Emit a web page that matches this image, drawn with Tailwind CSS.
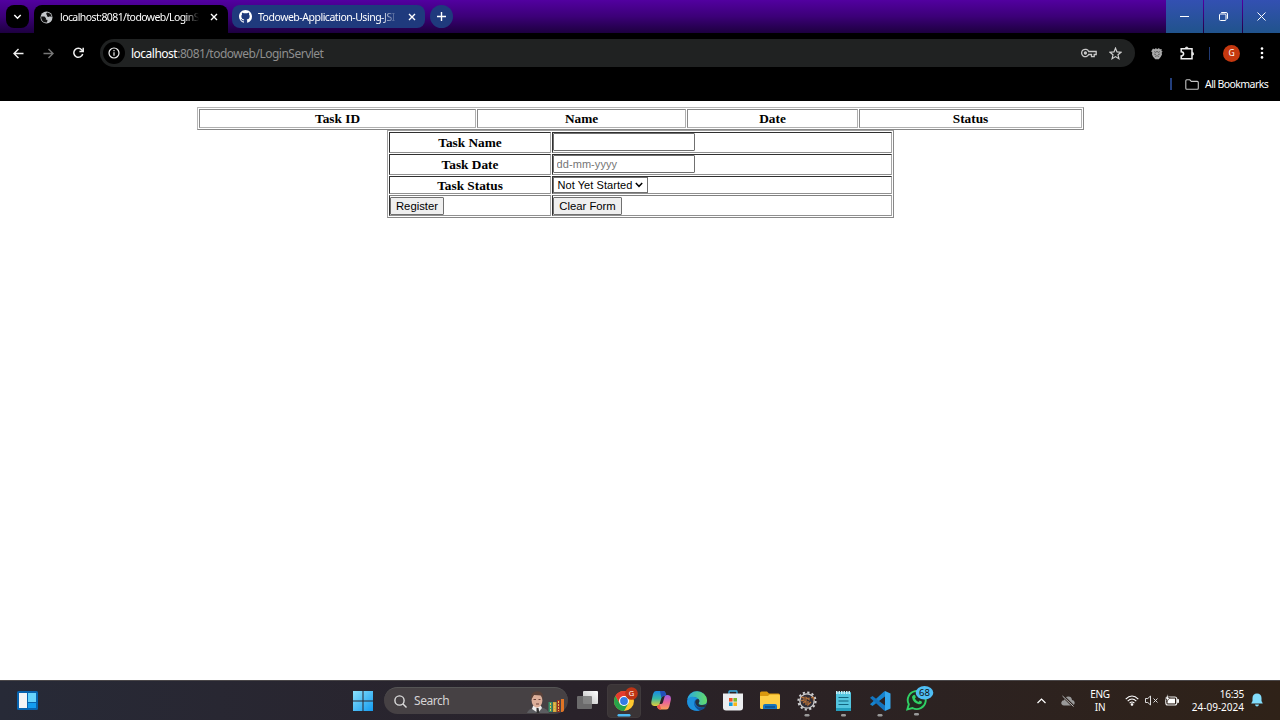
<!DOCTYPE html>
<html lang="en">
<head>
<meta charset="utf-8">
<title>Todoweb</title>
<script src="https://cdn.jsdelivr.net/npm/@tailwindcss/browser@4"></script>
</head>
<body class="w-[1280px] h-[720px] overflow-hidden bg-white flex flex-col font-['Noto_Sans',sans-serif]">
<header class="h-[101px] shrink-0 bg-black text-white flex flex-col">
  <!-- tab strip -->
  <div class="h-[33px] flex bg-linear-to-b from-[#5200a0] via-[#3c0078] to-[#1d0040]">
    <div class="w-[34px] pl-[6px] pt-[5px] shrink-0">
      <div class="w-[23px] h-[23px] rounded-[8px] bg-black flex items-center justify-center"><svg class="w-[9px] h-[9px]" viewBox="0 0 9 9" fill="none" stroke="#fff" stroke-width="1.5"><path d="M1.3 3l3.2 3.2L7.7 3"/></svg></div>
    </div>
    <div class="w-[194px] mt-[5px] h-[28px] bg-black rounded-t-[8px] flex items-center pl-[6px] pb-[4px] shrink-0">
      <svg class="w-[13px] h-[13px] shrink-0" viewBox="0 0 13 13"><circle cx="6.5" cy="6.5" r="6" fill="#c4c7ca"/><path d="M1.2 5.5L4.5 5.6 6 7.2 5.8 8.5 7.5 9 7 11.5 4 11.3C2 10 1 8 1.2 5.5zM7 1.5L6 3 7 4 6.8 5.3 8.5 6 10 5.2 11.6 6.3 11.2 4C10.2 2.3 9 1.6 7 1.5z" fill="#111"/></svg>
      <div class="ml-[7px] w-[139px] whitespace-nowrap text-[10.5px] leading-[16px] tracking-[-0.58px] mask-r-from-90% mask-r-to-100%">localhost:8081/todoweb/LoginS</div>
      <svg class="ml-[11px] w-[8px] h-[8px] shrink-0" viewBox="0 0 8 8" stroke="#fff" stroke-width="1.4"><path d="M1 1l6 6M7 1L1 7"/></svg>
    </div>
    <div class="ml-[4px] mt-[5px] w-[193px] h-[23px] rounded-[8px] bg-[#1f3a7d] flex items-center pl-[7px] shrink-0">
      <svg class="w-[13px] h-[13px] shrink-0" viewBox="0 0 16 16" fill="#fff"><path d="M8 0C3.58 0 0 3.58 0 8c0 3.54 2.29 6.53 5.47 7.59.4.07.55-.17.55-.38 0-.19-.01-.82-.01-1.49-2.01.37-2.53-.49-2.69-.94-.09-.23-.48-.94-.82-1.13-.28-.15-.68-.52-.01-.53.63-.01 1.08.58 1.23.82.72 1.21 1.87.87 2.33.66.07-.52.28-.87.51-1.07-1.78-.2-3.64-.89-3.64-3.95 0-.87.31-1.59.82-2.15-.08-.2-.36-1.02.08-2.12 0 0 .67-.21 2.2.82a7.6 7.6 0 0 1 4 0c1.53-1.04 2.2-.82 2.2-.82.44 1.1.16 1.92.08 2.12.51.56.82 1.27.82 2.15 0 3.07-1.87 3.75-3.65 3.95.29.25.54.73.54 1.48 0 1.07-.01 1.93-.01 2.2 0 .21.15.46.55.38A8 8 0 0 0 16 8c0-4.42-3.58-8-8-8z"/></svg>
      <div class="ml-[6px] w-[140px] whitespace-nowrap text-[10.5px] leading-[16px] tracking-[-0.48px] mask-r-from-88% mask-r-to-100%">Todoweb-Application-Using-JSI</div>
      <svg class="ml-[10px] w-[8px] h-[8px] shrink-0" viewBox="0 0 8 8" stroke="#fff" stroke-width="1.4"><path d="M1 1l6 6M7 1L1 7"/></svg>
    </div>
    <div class="ml-[5px] mt-[5px] w-[23px] h-[23px] rounded-full bg-[#1f3a7d] flex items-center justify-center shrink-0"><svg class="w-[9px] h-[9px]" viewBox="0 0 9 9" stroke="#fff" stroke-width="1.4"><path d="M4.5 0v9M0 4.5h9"/></svg></div>
    <div class="ml-auto flex gap-px">
      <div class="w-[37px] bg-linear-to-b from-[#3350b2] to-[#20538c] flex items-center justify-center"><svg class="w-[9px] h-[9px]" viewBox="0 0 9 9" stroke="#fff"><path d="M0 4.5h9"/></svg></div>
      <div class="w-[38px] bg-linear-to-b from-[#3350b2] to-[#20538c] flex items-center justify-center"><svg class="w-[9px] h-[9px]" viewBox="0 0 9 9" stroke="#fff" fill="none"><rect x=".5" y="2" width="6.5" height="6.5" rx="1"/><path d="M2.2.5H7A1.5 1.5 0 0 1 8.5 2v4.8"/></svg></div>
      <div class="w-[37px] bg-linear-to-b from-[#3350b2] to-[#20538c] flex items-center justify-center"><svg class="w-[9px] h-[9px]" viewBox="0 0 9 9" stroke="#fff"><path d="M.5.5l8 8M8.5.5l-8 8"/></svg></div>
    </div>
  </div>
  <!-- toolbar -->
  <div class="h-[40px] flex items-center">
    <svg class="ml-[13px] w-[11px] h-[11px]" viewBox="0 0 11 11" fill="none" stroke="#f0f0f0" stroke-width="1.4"><path d="M10.5 5.5H1M5.5 1L1 5.5 5.5 10"/></svg>
    <svg class="ml-[19px] w-[11px] h-[11px]" viewBox="0 0 11 11" fill="none" stroke="#777" stroke-width="1.4"><path d="M.5 5.5H10M5.5 1L10 5.5 5.5 10"/></svg>
    <svg class="ml-[19px] w-[11px] h-[12px]" viewBox="0 0 11 12" fill="none" stroke="#f0f0f0" stroke-width="1.5"><path d="M9.7 7A4.5 4.5 0 1 1 8.8 2.9L10 4.3"/><path d="M10.2.8v3.8H6.4"/></svg>
    <div class="ml-[16px] w-[1035px] h-[28px] rounded-full bg-[#202222] flex items-center pl-[3px]">
      <div class="w-[22px] h-[22px] rounded-full bg-black flex items-center justify-center"><svg class="w-[12px] h-[12px]" viewBox="0 0 12 12" fill="none" stroke="#f0f0f0" stroke-width="1.2"><circle cx="6" cy="6" r="5"/><path d="M6 5.3v3.4M6 3v1.3"/></svg></div>
      <div class="ml-[6px] mt-px text-[12px] leading-[18px] tracking-[-0.5px] text-[#8e8e8e]"><span class="text-white">localhost</span>:8081/todoweb/LoginServlet</div>
      <svg class="ml-auto w-[16px] h-[10px]" viewBox="0 0 16 10" fill="none" stroke="#c8c8c8" stroke-width="1.3"><path d="M7.7 3.5A3.7 3.7 0 1 0 7.7 6.5H10.5V8.7H13.2V6.5H15.2V3.5z"/><circle cx="4.4" cy="5" r="1" fill="#c8c8c8"/></svg>
      <svg class="ml-[12px] mr-[13px] w-[13px] h-[13px]" viewBox="0 0 13 13" fill="none" stroke="#d0d0d0" stroke-width="1.2"><path d="M6.5 1.2L8 4.9l4 .3-3 2.6.9 3.9-3.4-2.1-3.4 2.1.9-3.9-3-2.6 4-.3z"/></svg>
    </div>
    <svg class="ml-[16px] w-[12px] h-[13px]" viewBox="0 0 12 13"><path d="M1 3L2 1.5 3.5 2.2 5 1l1 1.2L8 1l.8 1.2L10.7 2 10.5 4l1.2.6-1 1 .3 2L9.7 10 7.8 12.3H4.3L2 9.8 1 7.5 1.3 5.6.2 4.5z" fill="#aaa"/><path d="M3 4.5l2 1 1-1.5 1 1.5 2-1M3 7l2 .5M9 7l-2 .5M4 9.5l2-.8 2 .8" stroke="#555" fill="none" stroke-width=".8"/></svg>
    <svg class="ml-[17px] mr-px w-[14px] h-[14px] mb-px" viewBox="0 0 14 14" fill="none" stroke="#eee" stroke-width="1.5"><path d="M1.2 2.8H12v9.9H1.2V10C4.4 9.8 4.4 5.900 1.200 5.700z"/><path d="M5.2 2.5a1.5 1.5 0 0 1 3 0zM12.2 6.3a1.5 1.5 0 0 1 0 3z" fill="#eee" stroke-width=".7"/></svg>
    <div class="ml-[14px] w-px h-[13px] bg-[#213a73]"></div>
    <div class="ml-[13px] w-[17px] h-[17px] rounded-full bg-[#c5380f] flex items-center justify-center text-[8.5px]">G</div>
    <svg class="ml-[20px] w-[4px] h-[12px]" viewBox="0 0 4 12" fill="#fff"><circle cx="2" cy="1.6" r="1.3"/><circle cx="2" cy="6" r="1.3"/><circle cx="2" cy="10.4" r="1.3"/></svg>
  </div>
  <div class="h-[22px] flex items-center justify-end pr-[11px]">
    <div class="w-[2px] h-[12px] bg-[#233f7d]"></div>
    <svg class="ml-[13px] w-[14px] h-[11px]" viewBox="0 0 14 11" fill="none" stroke="#c5c5c5" stroke-width="1.1"><path d="M.8 9.2v-7.4q0-1 1-1h3L6.3 2.4h6q1 0 1 1v5.8q0 1-1 1H1.8q-1 0-1-1z"/></svg>
    <div class="ml-[6px] w-[64px] whitespace-nowrap text-[10.5px] leading-[16px] tracking-[-0.58px]">All Bookmarks</div>
  </div>
</header>

<main class="h-[579px] shrink-0 bg-white pt-[6px] flex flex-col items-center font-['Liberation_Serif',serif] text-[13.3px] leading-[17px] font-bold text-black">
  <div class="w-[887px] h-[23px] border border-[#b5b5b5] border-b-[#888] border-r-[#888] p-px grid grid-cols-[277px_209px_171px_1fr] gap-px text-center *:border *:pl-px *:border-[#8a8a8a] *:border-b-[#b0b0b0] *:border-r-[#b0b0b0]">
    <div>Task ID</div><div>Name</div><div>Date</div><div>Status</div>
  </div>
  <form class="w-[507px] h-[88px] border border-[#a0a0a0] border-b-[#888] border-r-[#888] p-px grid grid-cols-[162px_1fr] grid-rows-[21px_21px_18px_21px] gap-px text-center *:border *:border-[#303030] *:border-b-[#909090] *:border-r-[#a5a5a5]">
    <div class="pt-px pl-px">Task Name</div>
    <div class="flex items-start"><input class="block w-[142px] h-[18px] border border-[#707070] rounded-[1px] bg-white"></div>
    <div class="pt-px pl-px">Task Date</div>
    <div class="flex items-start"><input placeholder="dd-mm-yyyy" class="block w-[142px] h-[18px] border border-[#707070] rounded-[1px] bg-white pl-[3px] pb-px text-[11px] tracking-[0.08px] font-normal font-['Liberation_Sans',sans-serif] placeholder:text-[#757575]"></div>
    <div class="pl-px">Task Status</div>
    <div class="flex items-center"><div class="w-[95px] h-[16px] border border-[#707070] flex items-center pl-[4px] text-[11px] tracking-[0.06px] whitespace-nowrap font-normal font-['Liberation_Sans',sans-serif]"><span>Not Yet Started</span><svg class="ml-[3px] w-[8px] h-[6px]" viewBox="0 0 8 6" fill="none" stroke="#000" stroke-width="1.5"><path d="M.8 1L4 4.3 7.2 1"/></svg></div></div>
    <div class="flex items-center border-t-[#808080]!"><button type="button" class="w-[54px] h-[18px] pl-px border border-[#707070] bg-[#efefef] rounded-[1px] text-[11.3px] leading-[16px] font-normal whitespace-nowrap font-['Liberation_Sans',sans-serif]">Register</button></div>
    <div class="flex items-center border-t-[#808080]!"><button type="button" class="w-[69px] h-[18px] pl-px border border-[#707070] bg-[#efefef] rounded-[1px] text-[11.3px] leading-[16px] font-normal whitespace-nowrap font-['Liberation_Sans',sans-serif]">Clear Form</button></div>
  </form>
</main>

<!-- taskbar -->
<footer class="h-[40px] shrink-0 border-t border-[#4a4749] bg-linear-to-r from-[#272a37] via-[#29222a] via-45% to-[#2f2218] flex items-center text-white">
  <svg class="ml-[17px] w-[21px] h-[19px]" viewBox="0 0 21 19"><rect width="21" height="19" rx="1.5" fill="#0863ae"/><rect x="2" y="2" width="8" height="15" fill="#f4f4f5"/><rect x="11" y="2" width="8" height="9" fill="#67d3fb"/><rect x="11" y="12" width="8" height="5" fill="#139cf0"/></svg>
  <svg class="ml-[315px] w-[20px] h-[20px]" viewBox="0 0 20 20"><defs><linearGradient id="win" x1="0" y1="0" x2="1" y2="1"><stop stop-color="#8be1fc"/><stop offset="1" stop-color="#129bf0"/></linearGradient></defs><path d="M0 0h9.5v9.5H0zM10.5 0H20v9.5h-9.5zM0 10.5h9.5V20H0zM10.5 10.5H20V20h-9.5z" fill="url(#win)"/></svg>
  <div class="ml-[11px] w-[184px] h-[27px] rounded-full bg-[#464144] border-t border-[#555] flex items-center pl-[10px]">
    <svg class="w-[13px] h-[13px]" viewBox="0 0 13 13" fill="none" stroke="#ddd" stroke-width="1.4"><circle cx="5.5" cy="5.5" r="4.6"/><path d="M9 9l3.500 3.500"/></svg>
    <div class="ml-[7px] text-[12px] leading-[18px] tracking-[-0.45px] text-[#d5d3d4]">Search</div>
    <svg class="ml-auto mr-[3px] w-[38px] h-[23px]" viewBox="0 0 38 23"><path d="M0 23q1-4 8-6h6q7 2 8 6z" fill="#5c5d61"/><path d="M6 16h8l1 2-4 5-6-4z" fill="#eee"/><path d="M9.500 18h2l1 5h-3z" fill="#333"/><ellipse cx="10" cy="10.500" rx="5.400" ry="7.200" fill="#dcae99"/><path d="M4.300 9.500Q3 1.500 10 1.200q7-.2 6 8L14.700 5.500 7 5z" fill="#5a4138"/><path d="M6.500 9.500h2.500M11.500 9.500h2M9 14h3" stroke="#6a4139"/><path d="M21.500 12h4v10h-4z" fill="#3a9268"/><path d="M26 12h3.500v10H26z" fill="#d5a83b"/><path d="M30 10h3v12h-3z" fill="#9e321c"/><path d="M34 9h3v11q0 2-3 2z" fill="#e07425"/><path d="M23.500 13v8M27.700 13v8M31.500 11v10" stroke="#e6c355" stroke-dasharray="2 1"/></svg>
  </div>
  <svg class="ml-[9px] w-[21px] h-[19px]" viewBox="0 0 21 19"><defs><linearGradient id="tv" x1="0" y1="1" x2="1" y2="0"><stop stop-color="#bbb"/><stop offset="1" stop-color="#fff"/></linearGradient></defs><rect x="6" y="0" width="15" height="13" rx="1" fill="url(#tv)"/><rect x="0" y="5" width="15" height="13" rx="1" fill="#777" fill-opacity=".85"/></svg>
  <div class="ml-[9px] w-[34px] h-[34px] rounded-[4px] bg-[#3a3436] border border-[#403a3c] flex items-center justify-center">
    <svg class="w-[32px] h-[34px] shrink-0" viewBox="0 0 32 34"><circle cx="16" cy="17" r="10" fill="#ffc82e"/><path d="M7.340 12A10 10 0 0 1 24.660 12H16l-4.330 7.500z" fill="#e33b2e"/><path d="M7.340 12A10 10 0 0 0 16 27L20.330 19.500 11.670 19.500z" fill="#28a34a"/><circle cx="16" cy="17" r="5" fill="#fff"/><circle cx="16" cy="17" r="3.900" fill="#347ce4"/><circle cx="23.500" cy="9.500" r="6.300" fill="#bd3415"/><text x="23.500" y="12.200" text-anchor="middle" font-family="Noto Sans" font-size="7.500" fill="#fff">G</text><rect x="9.500" y="30" width="13" height="2.500" rx="1.200" fill="#4ebcf4"/></svg>
  </div>
  <svg class="ml-[10px] w-[20px] h-[19px]" viewBox="0 0 20 19"><defs><linearGradient id="cpa" x1="0" y1="0" x2="0" y2="1"><stop stop-color="#1988e4"/><stop offset=".5" stop-color="#36b9a4"/><stop offset="1" stop-color="#e5ce35"/></linearGradient><linearGradient id="cpb" x1="0" y1="0" x2="0" y2="1"><stop stop-color="#a15bdf"/><stop offset=".5" stop-color="#e96598"/><stop offset="1" stop-color="#fba357"/></linearGradient></defs><path d="M5 0h7q2 0 2.600 2l.6 3H13q-2 0-2.600 2L8.500 13q-.6 2-2.600 2H3Q-.5 14.500.5 10L2 3q.8-3 3-3z" fill="url(#cpa)"/><path d="M15 4h2q3.500.500 2.800 5l-1.500 6.500q-.8 3-3 3H9q-2 0-2.600-2L5.900 15q2-.2 2.600-2l1.400 0q1.500 0 2-1.500L13.500 6q.4-2 1.500-2z" fill="url(#cpb)"/><path d="M9 0h3q2 0 2.600 2L15.500 4.500 13 5q-2 0-2.600 2z" fill="#2250b8"/><path d="M5.900 15q2-.2 2.600-2l1.700 5.500H9q-2 0-3.100-3.500z" fill="#ed5548"/></svg>
  <svg class="ml-[16px] w-[20px] h-[20px]" viewBox="0 0 20 20"><defs><linearGradient id="ea" x1="0" y1="0" x2="1" y2="0"><stop stop-color="#28a8e2"/><stop offset="1" stop-color="#64dc68"/></linearGradient></defs><circle cx="10" cy="10" r="10" fill="#1268ba"/><path d="M.2 8.500A10 10 0 0 1 20 9q.2 5-5 5-4 0-3.300-2 1.600-2-.2-4Q7 4 .2 8.500z" fill="url(#ea)"/><path d="M.1 10Q2 5 7 6q3 .5 4 2Q8 7.500 7.200 11q-.4 6 5.800 8.500Q5 21 1.500 15.500.1 13 .1 10z" fill="#1d91dc"/><path d="M7.200 11q.4 6 8 6 2.200-.2 3.500-.8Q16.500 19 13 19.500 7 17 7.200 11z" fill="#124d91"/><path d="M11.700 12q1.600-2-.2-4-3 0-3.300 3 .5 5 6.500 5.500 3 0 4-1.300l.3-2Q17.500 14 15 14q-4 0-3.300-2z" fill="#253240"/></svg>
  <svg class="ml-[16px] w-[20px] h-[21px]" viewBox="0 0 20 21"><path d="M6 5V1.700q0-.7.700-.7h6.600q.7 0 .7.700V5" fill="none" stroke="#38aee5" stroke-width="1.300"/><path d="M0 3.500h20v14q0 3-3 3H3q-3 0-3-3z" fill="#eceef0"/><path d="M6 8h3.600v3.600H6z" fill="#ee5027"/><path d="M10.400 8H14v3.600h-3.600z" fill="#7cb82b"/><path d="M6 12.400h3.600V16H6z" fill="#139ddb"/><path d="M10.400 12.400H14V16h-3.600z" fill="#f8b719"/></svg>
  <svg class="ml-[17px] w-[20px] h-[19px]" viewBox="0 0 20 19"><path d="M0 2q0-1.500 1.500-1.500H7L9 2.500h9.500Q20 2.500 20 4v10H0z" fill="#d9980e"/><path d="M0 5h8l1.500-1.500H18.500Q20 3.500 20 5v11.500q0 1.500-1.500 1.500h-17Q0 18 0 16.500z" fill="#fdce46"/><path d="M3 18v-3q0-2 2-2h10q2 0 2 2v3z" fill="#1673bc"/><path d="M5 16h10" stroke="#0a4c89" stroke-width="1.500"/></svg>
  <svg class="ml-[17px] w-[20px] h-[32px] mt-[6px]" viewBox="0 0 20 32"><circle cx="10" cy="13" r="8.600" fill="none" stroke="#d0d0d2" stroke-width="2" stroke-dasharray="2.200 2.300"/><circle cx="10" cy="13" r="7.200" fill="#302e38" stroke="#d0d0d0" stroke-width="1.300"/><path d="M4 9.500h3v3H4M9 12.500v-3l3 2v-2M14 9.500h2.500v3M6 15l3-2v4M11 13v4l3-3" fill="none" stroke="#b06e39" stroke-width="1.300"/><rect x="7.500" y="26" width="5" height="2.500" rx="1.200" fill="#999"/></svg>
  <svg class="ml-[19px] w-[16px] h-[32px] mt-[6px]" viewBox="0 0 16 32"><rect x="0" y="4" width="15" height="19" rx="1" fill="#54c5df"/><path d="M0 20h15v2q0 1-1 1H1q-1 0-1-1z" fill="#249ebd"/><path d="M0 4.500h15" stroke="#c7edf5" stroke-width="3" stroke-dasharray="1.500 1"/><path d="M2.500 9.500h10M2.500 13h10M2.500 16.500h10" stroke="#12647e" stroke-width="1.200"/><rect x="5" y="26" width="5" height="2.500" rx="1.200" fill="#999"/></svg>
  <svg class="ml-[18px] w-[21px] h-[32px] mt-[6px]" viewBox="0 0 21 32"><path d="M15 3l5.500 2.500v15L15 23z" fill="#35a8ed"/><path d="M15 3v5.500L2.500 18 0 16.300 13.500 4z" fill="#1684cf"/><path d="M15 23v-5.500L2.500 8 0 9.700 13.500 22z" fill="#1474be"/><rect x="7.500" y="26" width="5" height="2.500" rx="1.200" fill="#999"/></svg>
  <svg class="ml-[15px] w-[28px] h-[34px] mt-[4px]" viewBox="0 0 28 34"><path d="M1.300 23.500l1.500-5.200A9 9 0 1 1 6.500 22z" fill="#222a20" stroke="#30d064" stroke-width="1.900"/><path d="M7.200 9.200q1.400-1 2 .3l.7 1.800-1 1.300q1 2.300 3.500 3.300l1.300-1.400 2.300 1.200q0 2.700-3.200 2.500-5.800-1.200-6.800-7 0-1.200 1.200-2z" fill="#30d064"/><ellipse cx="18.500" cy="6.700" rx="8.800" ry="6.700" fill="#4fbef4"/><text x="18.500" y="10.200" text-anchor="middle" font-family="Noto Sans" font-size="9.500" fill="#111">68</text><rect x="8" y="27" width="5" height="2.500" rx="1.200" fill="#999"/></svg>

  <div class="ml-auto pr-[17px] flex items-center">
    <svg class="w-[9px] h-[6px]" viewBox="0 0 9 6" fill="none" stroke="#fff" stroke-width="1.200"><path d="M.5 5l4-4 4 4"/></svg>
    <svg class="ml-[15px] w-[14px] h-[12px]" viewBox="0 0 14 12"><path d="M3 10.500Q0 10 .3 7.500.7 5.300 3 5.200 4 1.600 7.300 1.600T11 5q2.500 0 2.700 2.500 0 3-3 3z" fill="#999"/><path d="M1 0l12 12" stroke="#2d231f" stroke-width="2.500"/><path d="M1.500 1l11 10.500" stroke="#bbb" stroke-width="1"/></svg>
    <div class="ml-[14px] w-[22px] text-center text-[10px] leading-[13px] tracking-[-0.3px]">ENG<br>IN</div>
    <svg class="ml-[14px] w-[14px] h-[11px]" viewBox="0 0 14 11" fill="none" stroke="#fff" stroke-width="1.100"><path d="M.7 4.200Q7-2.300 13.300 4.200M2.700 6.200q4.300-4.500 8.600 0M4.600 8.200q2.400-2.500 4.800 0"/><circle cx="7" cy="9.500" r=".8" fill="#fff"/></svg>
    <svg class="ml-[6px] w-[13px] h-[11px]" viewBox="0 0 13 11" fill="none" stroke="#ddd"><path d="M.5 3.500h2.300L5.500 1v9L2.800 7.500H.5zM8.500 3.500l4 4M12.500 3.500l-4 4"/></svg>
    <svg class="ml-[7px] mb-[2px] w-[14px] h-[12px]" viewBox="0 0 14 12"><rect x=".8" y="3" width="11" height="8" rx="2" fill="none" stroke="#eee" stroke-width="1.100"/><rect x="2.500" y="4.600" width="7.500" height="4.800" fill="#fff"/><path d="M12.500 5.500h1v3h-1z" fill="#eee" stroke="#eee"/><path d="M3 0L0 5h2L1.500 8 5 3.500H3.200z" fill="#fff" stroke="#2d231f" stroke-width=".6"/></svg>
    <div class="ml-[11px] w-[54px] text-right whitespace-nowrap text-[10px] leading-[13px]"><div class="tracking-[-0.25px]">16:35</div><div>24-09-2024</div></div>
    <svg class="ml-[7px] w-[12px] h-[14px] mb-px" viewBox="0 0 12 14" fill="#83ddfc"><path d="M6 .5q4.300 0 4.500 4.500v3l1.300 2.500H.2L1.500 8V5Q1.700.5 6 .5zM4 11.500h4q-.4 2-2 2t-2-2z"/></svg>
  </div>
</footer>
</body>
</html>
